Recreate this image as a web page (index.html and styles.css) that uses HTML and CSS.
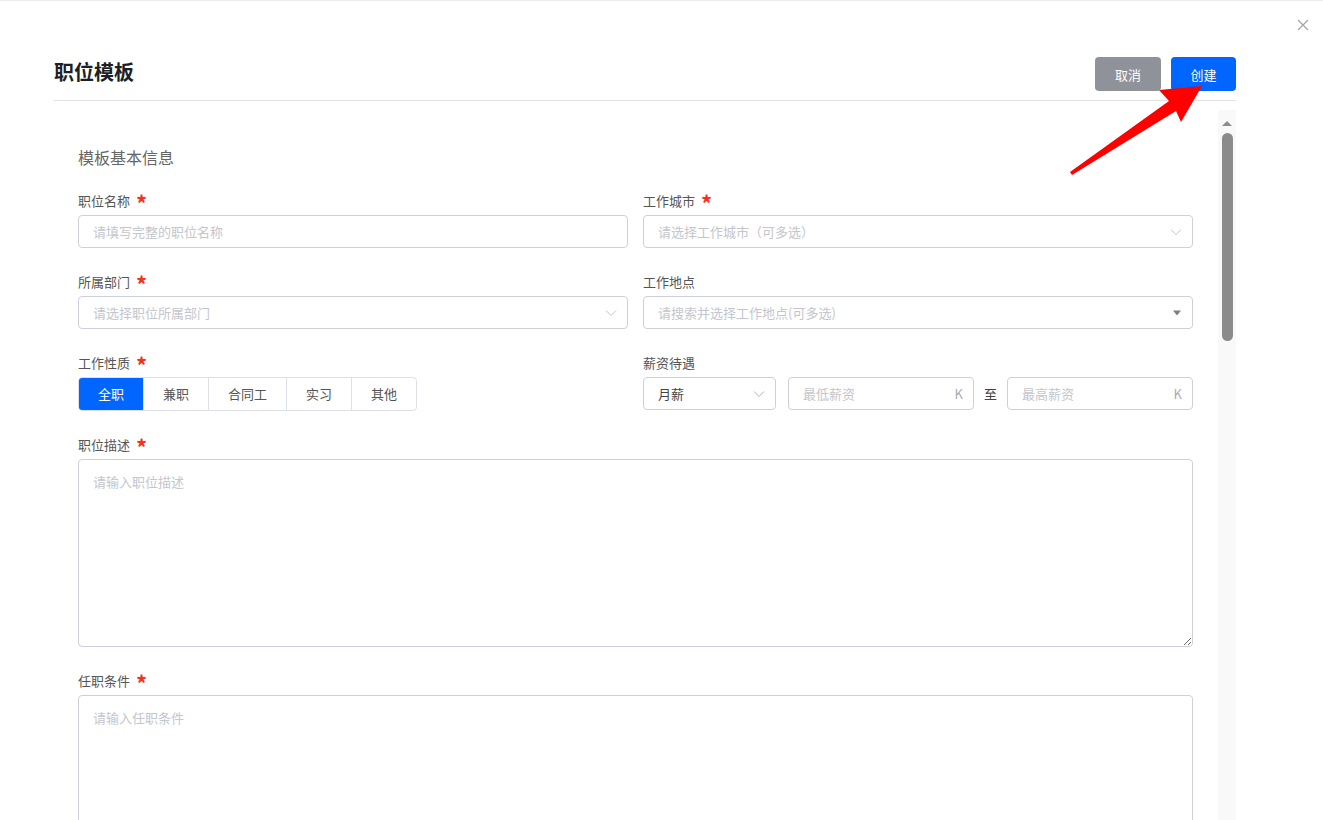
FILE: index.html
```html
<!DOCTYPE html>
<html lang="zh">
<head>
  <meta charset="UTF-8">
  <meta name="viewport" content="width=device-width, initial-scale=1.0">
  <title>职位模板</title>
  <link rel="stylesheet" href="styles.css">
</head>
<body>
  <div id="drawer">
    <!-- 关闭按钮 -->
    <a class="closeBtn" href="#">
      <svg width="12" height="12" viewBox="0 0 12 12"><path d="M1 1L11 11M11 1L1 11" stroke="#a3a6ad" stroke-width="1.3" fill="none"/></svg>
    </a>

    <div id="header">
      <h1>职位模板</h1>
      <div class="actions">
        <button class="btn btnCancel">取消</button>
        <button class="btn btnPrimary">创建</button>
      </div>
    </div>

    <div id="body">
      <div id="content">
        <h2 class="sectionTitle">模板基本信息</h2>
        <form id="templateForm">
          <div class="formItem">
            <label>职位名称<span class="star">*</span></label>
            <input type="text" class="textInput" placeholder="请填写完整的职位名称">
          </div>
          <div class="formItem">
            <label>工作城市<span class="star">*</span></label>
            <div class="select">
              <span class="placeholder">请选择工作城市（可多选）</span>
              <svg class="arrow" width="12" height="8" viewBox="0 0 12 8"><path d="M1 1.5L6 6.5L11 1.5" stroke="#c0c4cc" stroke-width="1" fill="none"/></svg>
            </div>
          </div>

          <div class="formItem">
            <label>所属部门<span class="star">*</span></label>
            <div class="select">
              <span class="placeholder">请选择职位所属部门</span>
              <svg class="arrow" width="12" height="8" viewBox="0 0 12 8"><path d="M1 1.5L6 6.5L11 1.5" stroke="#c0c4cc" stroke-width="1" fill="none"/></svg>
            </div>
          </div>
          <div class="formItem">
            <label>工作地点</label>
            <div class="select">
              <span class="placeholder">请搜索并选择工作地点(可多选)</span>
              <svg class="arrow" width="10" height="6" viewBox="0 0 10 6"><path d="M1 0.5H9L5 5.5Z" fill="#7d7f84"/></svg>
            </div>
          </div>

          <div class="formItem">
            <label>工作性质<span class="star">*</span></label>
            <div class="segmented">
              <span class="seg active">全职</span>
              <span class="seg">兼职</span>
              <span class="seg">合同工</span>
              <span class="seg">实习</span>
              <span class="seg">其他</span>
            </div>
          </div>
          <div class="formItem">
            <label>薪资待遇</label>
            <div class="salaryRow">
              <div class="select salaryType">
                <span class="value">月薪</span>
                <svg class="arrow" width="12" height="8" viewBox="0 0 12 8"><path d="M1 1.5L6 6.5L11 1.5" stroke="#b0b3ba" stroke-width="1" fill="none"/></svg>
              </div>
              <div class="suffixInput">
                <input type="text" placeholder="最低薪资">
                <span class="suffix">K</span>
              </div>
              <span class="to">至</span>
              <div class="suffixInput">
                <input type="text" placeholder="最高薪资">
                <span class="suffix">K</span>
              </div>
            </div>
          </div>

          <div class="formItem wide">
            <label>职位描述<span class="star">*</span></label>
            <textarea placeholder="请输入职位描述"></textarea>
          </div>
          <div class="formItem wide">
            <label>任职条件<span class="star">*</span></label>
            <textarea placeholder="请输入任职条件"></textarea>
          </div>
        </form>
      </div>

      <!-- 滚动条 -->
      <div class="scrollbar">
        <span class="scrollUp"></span>
        <span class="thumb"></span>
      </div>
    </div>
  </div>

  <!-- 指向创建按钮的箭头 -->
  <svg class="pointer" width="1323" height="820" viewBox="0 0 1323 820">
    <polygon points="1070,172 1169,101 1159,90 1202,86 1181,122 1176,111 1072,175" fill="#ff0000"/>
  </svg>
</body>
</html>
```

FILE: styles.css
```css
/* 全局 */
body {
  margin: 0;
  padding: 0;
  font-family: "Noto Sans CJK SC", "Noto Sans", sans-serif;
  background-color: #fff;
  color: #555;
  border-top: 1px solid #ececec;
  height: 819px;
  overflow: hidden;
}
#drawer {
  position: relative;
  padding: 0 87px 0 54px;
}
.closeBtn {
  position: absolute;
  top: 18px;
  right: 14px;
  display: block;
  line-height: 0;
}
/* 标题栏 */
#header {
  display: flex;
  align-items: center;
  justify-content: space-between;
  padding: 56px 0 9px;
  border-bottom: 1px solid #dfe1e8;
}
#header h1 {
  margin: -6px 0 0;
  font-size: 20px;
  font-weight: bold;
  color: #1d1f24;
  line-height: 33px;
}
.actions {
  display: flex;
  gap: 10px;
}
.btn {
  width: 66px;
  height: 34px;
  border: none;
  border-radius: 4px;
  color: #fff;
  font-family: inherit;
  font-size: 13px;
  cursor: pointer;
}
.btnCancel {
  background-color: #8f9299;
}
.btnPrimary {
  width: 65px;
  background-color: #0066ff;
}
/* 内容区 */
#body {
  display: flex;
  margin-top: 9px;
  height: 710px;
}
#content {
  flex: 1;
  overflow: hidden;
  padding: 36px 25px 0 24px;
}
.sectionTitle {
  margin: 0 0 23px;
  font-size: 16px;
  font-weight: normal;
  line-height: 22px;
  color: #666;
}
#templateForm {
  display: grid;
  grid-template-columns: 550px 550px;
  column-gap: 15px;
}
.formItem {
  display: flex;
  flex-direction: column;
  margin-bottom: 24px;
}
.formItem.wide {
  grid-column: 1 / 3;
}
label {
  font-size: 13px;
  line-height: 20px;
  color: #555;
  margin-bottom: 4px;
}
.star {
  color: #f5311c;
  font-size: 22px;
  font-weight: bold;
  margin-left: 6px;
  position: relative;
  top: 6px;
  line-height: 0;
}
.textInput,
.select,
.suffixInput,
textarea {
  box-sizing: border-box;
  border: 1px solid #cdd0da;
  border-radius: 4px;
  background: #fff;
  font-family: inherit;
  font-size: 13px;
}
.textInput {
  height: 33px;
  padding: 0 14px;
  outline: none;
}
::placeholder {
  color: #c3c6cd;
}
.select {
  display: flex;
  align-items: center;
  justify-content: space-between;
  height: 33px;
  padding: 0 10px 0 14px;
}
.select .placeholder {
  color: #c3c6cd;
}
.select .value {
  color: #444;
}
/* 工作性质 */
.segmented {
  display: flex;
  align-self: flex-start;
  border: 1px solid #dde0e8;
  border-radius: 4px;
  overflow: hidden;
}
.seg {
  padding: 0 19px;
  font-size: 13px;
  line-height: 32px;
  color: #555;
  border-left: 1px solid #dde0e8;
}
.seg:first-child {
  border-left: none;
}
.seg.active {
  background-color: #0066ff;
  color: #fff;
}
/* 薪资 */
.salaryRow {
  display: flex;
  align-items: center;
}
.salaryType {
  width: 133px;
  margin-right: 12px;
}
.suffixInput {
  flex: 1;
  display: flex;
  align-items: center;
  height: 33px;
  padding: 0 10px 0 14px;
}
.suffixInput input {
  flex: 1;
  min-width: 0;
  border: none;
  outline: none;
  padding: 0;
  font-family: inherit;
  font-size: 13px;
}
.suffix {
  color: #a8abb2;
  font-size: 13px;
}
.to {
  margin: 0 10px;
  font-size: 13px;
  color: #444;
}
textarea {
  height: 188px;
  padding: 12px 14px;
  outline: none;
  resize: vertical;
  line-height: 20px;
}
/* 滚动条 */
.scrollbar {
  width: 18px;
  background-color: #f9f9f9;
  display: flex;
  flex-direction: column;
  align-items: center;
}
.scrollUp {
  margin-top: 11px;
  width: 0;
  height: 0;
  border-left: 5px solid transparent;
  border-right: 5px solid transparent;
  border-bottom: 5px solid #8c8c8c;
}
.thumb {
  margin-top: 7px;
  width: 11px;
  height: 208px;
  border-radius: 6px;
  background-color: #8b8b8b;
}
.pointer {
  position: absolute;
  top: 0;
  left: 0;
  pointer-events: none;
}
```
